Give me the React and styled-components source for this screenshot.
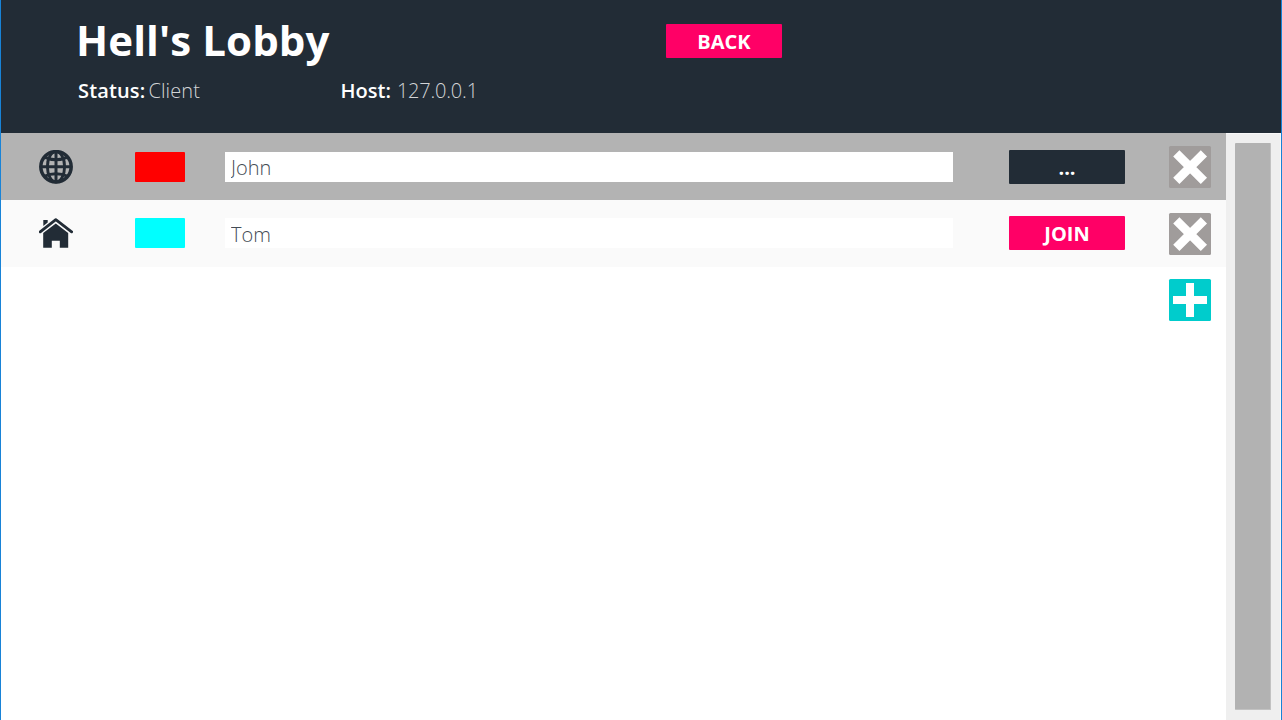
import React from "react";
import styled, { createGlobalStyle } from "styled-components";

const GlobalStyle = createGlobalStyle`
  *, *::before, *::after { box-sizing: border-box; }
  body { margin: 0; background: #fff; font-family: "Open Sans", sans-serif; }
`;

const Window = styled.div`
  display: flex;
  flex-direction: column;
  width: 1282px;
  height: 720px;
  overflow: hidden;
  border: solid #1883d7;
  border-width: 0 1px;
  background: #fff;
`;

const Header = styled.header`
  display: flex;
  flex: none;
  align-items: flex-start;
  height: 133px;
  padding-left: 75px;
  background: #222c36;
  color: #fff;
`;

const HeaderInfo = styled.div`
  width: 589px;
`;

const Title = styled.h1`
  margin: 12px 0 0;
  font-size: 42px;
  font-weight: 700;
  line-height: 56px;
  letter-spacing: 0.1px;
  white-space: nowrap;
`;

const Details = styled.div`
  display: flex;
  margin-top: 9px;
  padding-left: 2px;
  font-size: 20px;
  line-height: 28px;
`;

const Detail = styled.div`
  display: flex;
  width: 262.5px;
  gap: ${(p) => p.$gap}px;
  white-space: nowrap;
`;

const Label = styled.span`
  font-weight: 600;
  letter-spacing: ${(p) => p.$spacing || 0}px;
`;

const Value = styled.span`
  color: #d3d5d7;
  font-weight: 300;
  letter-spacing: ${(p) => p.$spacing}px;
`;

const Button = styled.button`
  flex: none;
  width: 116px;
  height: 34px;
  padding: 0;
  border: 0;
  border-radius: 1px;
  background: ${(p) => (p.$muted ? "#222c36" : "#ff0066")};
  color: #fff;
  font-family: inherit;
  font-size: 20px;
  font-weight: 700;
  line-height: 36px;
  text-align: center;
`;

const BackButton = styled(Button)`
  margin-top: 24px;
  margin-left: 1px;
  line-height: 35px;
`;

const Body = styled.main`
  display: flex;
  flex: 1;
  min-height: 0;
`;

const PlayerList = styled.section`
  width: 1225px;
`;

const Row = styled.div`
  display: flex;
  align-items: center;
  height: 67px;
  padding-left: 38px;
  padding-bottom: ${(p) => p.$lift || 0}px;
  background: ${(p) => p.$background};
`;

const RowIcon = styled.svg`
  flex: none;
  width: 34px;
  height: 34px;
  margin-right: 62px;
`;

const Swatch = styled.div`
  flex: none;
  width: 50px;
  height: 30px;
  margin-right: 40px;
  border-radius: 1px;
  background: ${(p) => p.$color};
`;

const NameInput = styled.input`
  flex: none;
  width: 728px;
  height: 30px;
  margin-right: 56px;
  padding: ${(p) => (p.$lift ? 2 : 1)}px 0 0 6px;
  border: 0;
  background: #fff;
  color: #444c55;
  font-family: inherit;
  font-size: 20px;
  font-weight: 300;
  line-height: 29px;
`;

const SquareButton = styled.button`
  display: flex;
  flex: none;
  width: 42px;
  height: 42px;
  margin: 1px 15px 0 auto;
  padding: 0;
  border: 0;
  border-radius: 1.5px;
  background: ${(p) => (p.$add ? "#00cccc" : "#a09c9b")};
`;

const ScrollTrack = styled.aside`
  display: flex;
  flex: 1;
  padding: 9px 9px 10px;
  border-top: 1px solid #f8f8f8;
  border-right: 1px solid #f8f8f8;
  background: #efefef;
`;

const ScrollThumb = styled.div`
  flex: 1;
  border: 1px solid #c2c2c2;
  border-width: 0 1px 1px 0;
  border-radius: 1px;
  background: #b2b2b2;
`;

function GlobeIcon() {
  return (
    <RowIcon viewBox="0 0 34 34" fill="none" stroke="#222c36">
      <circle cx="17" cy="16.8" r="15.2" strokeWidth="3.5" />
      <ellipse cx="17" cy="16.8" rx="8.6" ry="15.2" strokeWidth="2.9" />
      <path d="M17 2v30M2 16.8h30" strokeWidth="3" />
      <path d="M5 7.2Q17 12.4 29 7.2M5 26.4Q17 21.2 29 26.4" strokeWidth="2.9" />
    </RowIcon>
  );
}

function HouseIcon() {
  return (
    <RowIcon viewBox="0 0 34 34" fill="#222c36">
      <path d="M4.3 4h4.4v2.4L4.3 9.9z" />
      <path
        d="M1.2 15.8 16.8 3.6 32.6 15.8"
        fill="none"
        stroke="#222c36"
        strokeWidth="2.8"
        strokeLinejoin="round"
        strokeLinecap="round"
      />
      <path d="M4.2 17 16.8 7.5 29.2 17V31.8H20.8V24.8H12.8V31.8H4.2z" />
    </RowIcon>
  );
}

function CrossIcon() {
  return (
    <svg width="42" height="42" viewBox="0 0 42 42" fill="none" stroke="#fff" strokeWidth="8.8">
      <path d="M7.3 7.3 34.9 34.9M34.9 7.3 7.3 34.9" />
    </svg>
  );
}

function PlusIcon() {
  return (
    <svg width="42" height="42" viewBox="0 0 42 42" fill="none" stroke="#fff" strokeWidth="8">
      <path d="M21 4v34M4 21h34" />
    </svg>
  );
}

const players = [
  { name: "John", color: "#ff0000", Icon: GlobeIcon, action: "...", muted: true, background: "#b3b3b3", lift: 0 },
  { name: "Tom", color: "#00ffff", Icon: HouseIcon, action: "JOIN", muted: false, background: "#fafafa", lift: 1 },
];

export default function App() {
  return (
    <>
      <GlobalStyle />
      <Window>
        <Header>
          <HeaderInfo>
            <Title>Hell's Lobby</Title>
            <Details>
              <Detail $gap={3}>
                <Label $spacing={0.15}>Status:</Label>
                <Value $spacing={0.1}>Client</Value>
              </Detail>
              <Detail $gap={6}>
                <Label>Host:</Label>
                <Value $spacing={-0.2}>127.0.0.1</Value>
              </Detail>
            </Details>
          </HeaderInfo>
          <BackButton>BACK</BackButton>
        </Header>
        <Body>
          <PlayerList>
            {players.map(({ name, color, Icon, action, muted, background, lift }) => (
              <Row key={name} $background={background} $lift={lift}>
                <Icon />
                <Swatch $color={color} />
                <NameInput $lift={lift} defaultValue={name} aria-label="Player name" />
                <Button $muted={muted}>{action}</Button>
                <SquareButton aria-label="Remove player">
                  <CrossIcon />
                </SquareButton>
              </Row>
            ))}
            <Row $background="#fff" $lift={2}>
              <SquareButton $add aria-label="Add player">
                <PlusIcon />
              </SquareButton>
            </Row>
          </PlayerList>
          <ScrollTrack>
            <ScrollThumb />
          </ScrollTrack>
        </Body>
      </Window>
    </>
  );
}
